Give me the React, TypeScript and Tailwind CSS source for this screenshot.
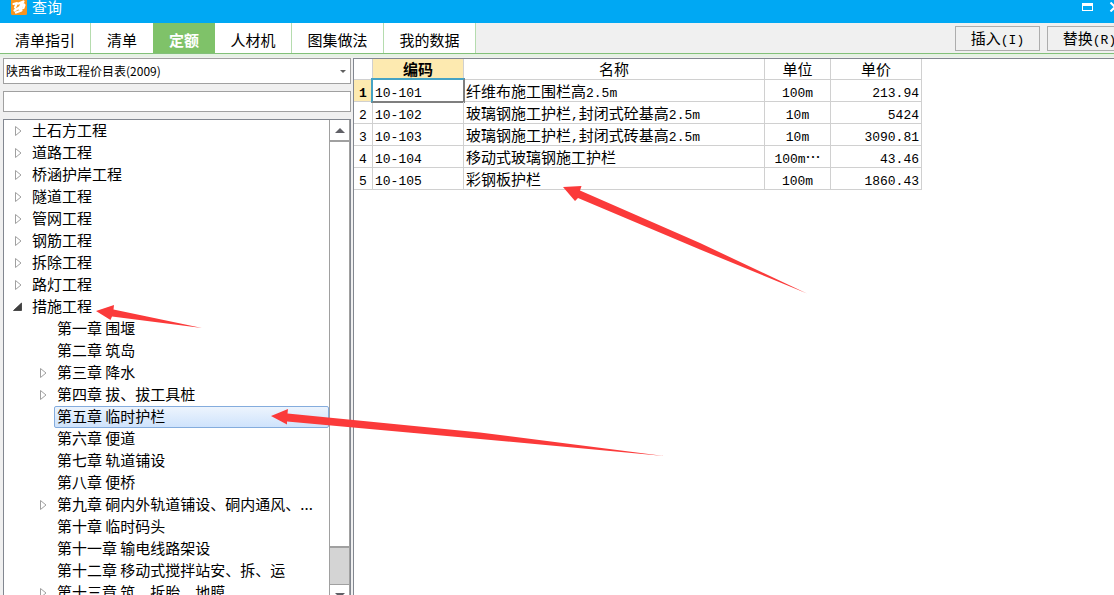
import React from "react";

const SANS = "font-['Noto_Sans_CJK_SC',sans-serif]";

/** Ideographs at 15px with Latin runs set in a narrower monospace. */
function Mixed({ text }: { text: string }) {
  const runs = text.match(/[\x21-\x7e]+|[^\x21-\x7e]+/g) ?? [];
  return (
    <>
      {runs.map((run, i) =>
        /^[\x21-\x7e]/.test(run) ? (
          <span key={i} className="font-['Liberation_Mono',monospace] text-[13px] leading-none">
            {run}
          </span>
        ) : (
          <span key={i}>{run}</span>
        ),
      )}
    </>
  );
}

const tabs = [
  { label: "清单指引", cls: "w-[91px] border-r" },
  { label: "清单", cls: "w-[62px]" },
  { label: "定额", cls: "w-[62px]", active: true },
  { label: "人材机", cls: "w-[77px] border-r" },
  { label: "图集做法", cls: "w-[92px] border-r" },
  { label: "我的数据", cls: "w-[92px] border-r" },
];

type Node = { label: string; state?: "closed" | "open"; selected?: boolean; children?: Node[] };

const tree: Node[] = [
  { label: "土石方工程", state: "closed" },
  { label: "道路工程", state: "closed" },
  { label: "桥涵护岸工程", state: "closed" },
  { label: "隧道工程", state: "closed" },
  { label: "管网工程", state: "closed" },
  { label: "钢筋工程", state: "closed" },
  { label: "拆除工程", state: "closed" },
  { label: "路灯工程", state: "closed" },
  {
    label: "措施工程",
    state: "open",
    children: [
      { label: "第一章 围堰" },
      { label: "第二章 筑岛" },
      { label: "第三章 降水", state: "closed" },
      { label: "第四章 拔、拔工具桩", state: "closed" },
      { label: "第五章 临时护栏", selected: true },
      { label: "第六章 便道" },
      { label: "第七章 轨道铺设" },
      { label: "第八章 便桥" },
      { label: "第九章 硐内外轨道铺设、硐内通风、...", state: "closed" },
      { label: "第十章 临时码头" },
      { label: "第十一章 输电线路架设" },
      { label: "第十二章 移动式搅拌站安、拆、运" },
      { label: "第十三章 筑、拆胎、地膜", state: "closed" },
    ],
  },
];

const rows = [
  ["10-101", "纤维布施工围栏高2.5m", "100m", "213.94"],
  ["10-102", "玻璃钢施工护栏,封闭式砼基高2.5m", "10m", "5424"],
  ["10-103", "玻璃钢施工护栏,封闭式砖基高2.5m", "10m", "3090.81"],
  ["10-104", "移动式玻璃钢施工护栏", "100m…", "43.46"],
  ["10-105", "彩钢板护栏", "100m", "1860.43"],
];

function Expander({ state }: { state?: "closed" | "open" }) {
  return (
    <svg className="h-3 w-3 shrink-0" viewBox="0 0 12 12" aria-hidden="true">
      {state === "closed" && <path d="M3.5 1.5v9l5.500-4.500z" fill="#fff" stroke="#a0a0a0" />}
      {state === "open" && <path d="M9.500 2v7.500h-8z" fill="#404040" stroke="#262626" strokeWidth=".7" />}
    </svg>
  );
}

function TreeItem({ node, depth }: { node: Node; depth: number }) {
  return (
    <li role="treeitem" aria-expanded={node.state ? node.state === "open" : undefined} aria-selected={!!node.selected}>
      <div className={`flex h-[22px] items-center gap-[5px] ${depth ? "pl-[33px]" : "pl-2"}`}>
        <Expander state={node.state} />
        <button
          type="button"
          className={`h-[22px] min-w-0 flex-1 truncate rounded-[2px] border pb-[2px] pl-[2px] text-left text-[15px] leading-[18px] ${
            node.selected
              ? "border-[#84acdd] bg-linear-to-b from-[#edf4fd] to-[#cfe3fc]"
              : "border-transparent"
          }`}
        >
          {node.label}
        </button>
      </div>
      {node.children && (
        <ul role="group">
          {node.children.map((c) => (
            <TreeItem key={c.label} node={c} depth={depth + 1} />
          ))}
        </ul>
      )}
    </li>
  );
}

function TitleBar() {
  return (
    <header className="flex h-[23px] shrink-0 items-start bg-[#00a8f3] text-white">
      <svg className="ml-[11px] h-[15px] w-4" viewBox="0 0 16 15" aria-hidden="true">
        <rect y="-3" width="16" height="18" rx="1.500" fill="#f7941d" />
        <path
          d="M2.500 4 6 3 4 7.500M7.500 3.500l5-2-3 4M3.500 10.500 13 4.500M13.500 5l-1 3-4 1M5 12.500l5.500-2"
          fill="none"
          stroke="#fff"
          strokeWidth="2.200"
          strokeLinejoin="round"
          strokeLinecap="round"
        />
      </svg>
      <h1 className="ml-[5px] text-[15px] leading-[13px]">查询</h1>
      <div className="-mr-[7px] ml-auto flex gap-[16px]">
        <button type="button" aria-label="最大化" className="mt-[3px] h-2 w-[11px] border border-t-[3px] border-white" />
        <button type="button" aria-label="关闭" className="mt-[2px]">
          <svg className="h-[10px] w-[12px]" viewBox="0 0 12 10" aria-hidden="true">
            <path d="m1.500.5 9 9m0-9-9 9" stroke="#fff" strokeWidth="2" />
          </svg>
        </button>
      </div>
    </header>
  );
}

function ToolBar() {
  const btn =
    "h-[25px] w-[85px] shrink-0 border border-[#adadad] bg-[#f0f0f0] pb-[2px] text-[15px] leading-[21px] whitespace-nowrap";
  return (
    <div className="flex h-[31px] shrink-0 border-b border-b-[#82c079] bg-[#f0f0f0]">
      <nav className="flex">
        {tabs.map((t) => (
          <button
            key={t.label}
            type="button"
            className={`${t.cls} border-[#b5dcae] pt-[3px] text-center text-[15px] leading-[22px] ${
              t.active ? "bg-[#7fc269] font-bold text-white" : "bg-white"
            }`}
          >
            {t.label}
          </button>
        ))}
      </nav>
      <div className="-mr-[18px] ml-auto flex gap-[7px] pt-[3px]">
        <button type="button" className={btn}>
          <Mixed text="插入(I)" />
        </button>
        <button type="button" className={btn}>
          <Mixed text="替换(R)" />
        </button>
      </div>
    </div>
  );
}

function SidePanel() {
  return (
    <aside className="flex w-[348px] shrink-0 flex-col">
      <div className="relative">
        <select
          aria-label="定额库"
          className="block h-[26px] w-full appearance-none border border-[#a0a0a0] bg-white pl-[2px] text-[12px]"
        >
          <option>陕西省市政工程价目表(2009)</option>
        </select>
        <svg className="pointer-events-none absolute top-3 right-[5px] h-[3px] w-[6px]" viewBox="0 0 6 3" aria-hidden="true">
          <path d="M0 0h6L3 3z" fill="#606060" />
        </svg>
      </div>
      <input
        aria-label="搜索"
        className="mt-[7px] h-[21px] w-full border border-[#a0a0a0] bg-white px-1 text-[12px] outline-none"
      />
      <div className="mt-[7px] flex min-h-0 flex-1 border border-b-0 border-[#828790] bg-white">
        <ul role="tree" className="min-w-0 flex-1 overflow-hidden">
          {tree.map((n) => (
            <TreeItem key={n.label} node={n} depth={0} />
          ))}
        </ul>
        <div className="flex w-[21px] shrink-0 flex-col border-x border-[#a0a0a0] bg-[#d4d4d4]">
          <div className="flex h-[22px] items-center justify-center border-b-2 border-[#a0a0a0] bg-white">
            <svg className="h-[5px] w-[10px]" viewBox="0 0 10 5" aria-hidden="true">
              <path d="M0 5h10L5 0z" fill="#606066" />
            </svg>
          </div>
          <div className="flex-1 border-b-2 border-[#a0a0a0] bg-white" />
          <div className="h-9" />
          <div className="flex h-[11px] justify-center overflow-hidden border-t border-[#a0a0a0] bg-white pt-2">
            <svg className="h-[5px] w-[10px] shrink-0" viewBox="0 0 10 5" aria-hidden="true">
              <path d="M0 0h10L5 5z" fill="#606066" />
            </svg>
          </div>
        </div>
      </div>
    </aside>
  );
}

function PriceTable() {
  const cell = "border-r border-b border-[#d0d0d0] p-0";
  return (
    <main className="min-w-0 flex-1 border-t border-l border-[#828790] bg-white">
      <table className="w-[568px] table-fixed border-separate border-spacing-0 text-[15px] leading-[18px]">
        <colgroup>
          <col className="w-[19px]" />
          <col className="w-[91px]" />
          <col className="w-[301px]" />
          <col className="w-[66px]" />
          <col className="w-[91px]" />
        </colgroup>
        <thead>
          <tr className="h-[21px]">
            <th className={cell} />
            <th className={`${cell} bg-[#fdeab0] font-bold`}>编码</th>
            <th className={`${cell} font-normal`}>名称</th>
            <th className={`${cell} font-normal`}>单位</th>
            <th className={`${cell} font-normal`}>单价</th>
          </tr>
        </thead>
        <tbody>
          {rows.map((r, i) => (
            <tr key={r[0]} className="h-[22px]">
              <th className={`${cell} ${i === 0 ? "bg-[#fdeab0] font-bold" : "font-normal"}`}>
                <Mixed text={String(i + 1)} />
              </th>
              <td className={`${cell} relative pl-[2px]`}>
                <Mixed text={r[0]} />
                {i === 0 && (
                  <span className="absolute -inset-[2px] border-2 border-[#7f7f7f] border-t-[#45a3c4] border-l-[#45a3c4]" />
                )}
              </td>
              <td className={`${cell} overflow-hidden pl-[2px] whitespace-nowrap`}>
                <Mixed text={r[1]} />
              </td>
              <td className={`${cell} text-center whitespace-nowrap`}>
                <Mixed text={r[2]} />
              </td>
              <td className={`${cell} pr-[2px] text-right`}>
                <Mixed text={r[3]} />
              </td>
            </tr>
          ))}
        </tbody>
      </table>
    </main>
  );
}

/** Red annotation arrows laid over the window. */
function Arrows() {
  return (
    <svg className="pointer-events-none absolute top-0 left-0 h-[595px] w-[1114px]" viewBox="0 0 1114 595" fill="#fb3a3a" aria-hidden="true">
      <path d="M563 187 581.500 186 580 190.500 700 243 807 293.500 700 249.500 578 198 575 201z" />
      <path d="M271 416 288 409 287.500 413.500 480 432.500 664 456 480 439 287 421.500 287 424.500z" />
      <path d="M96 311 114 305 113.500 309.500 202 328 112 316.500 110.500 320z" />
    </svg>
  );
}

export default function App() {
  return (
    <div
      lang="zh-CN"
      className={`relative flex h-screen flex-col overflow-hidden bg-[#f0f0f0] text-black ${SANS}`}
    >
      <TitleBar />
      <ToolBar />
      <div className="flex min-h-0 flex-1 gap-[2px] border-t-[3px] border-[#e6f1e4] bg-[#f0f0f0] pt-px pl-[3px]">
        <SidePanel />
        <PriceTable />
      </div>
      <Arrows />
    </div>
  );
}
